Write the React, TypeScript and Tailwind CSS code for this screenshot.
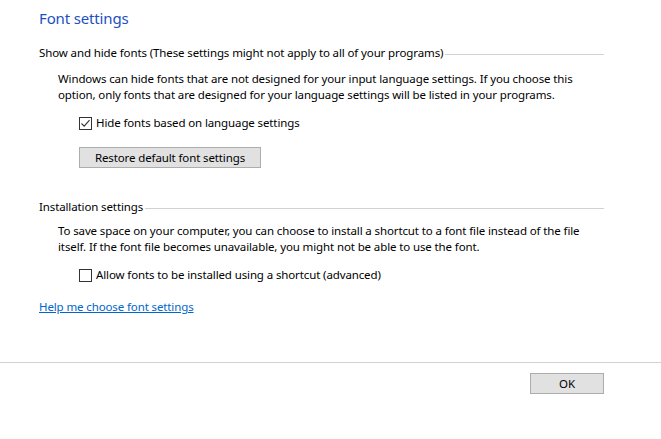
import React from "react";

function Checkbox({ checked }: { checked: boolean }) {
  return (
    <span className="w-[13px] h-[13px] border border-[#333333] bg-white flex items-center justify-center shrink-0">
      {checked && (
        <svg width="11" height="11" viewBox="0 0 11 11">
          <path d="M1.5 5.5 L4.2 8.2 L9.5 2.2" fill="none" stroke="#333333" strokeWidth="1.1" />
        </svg>
      )}
    </span>
  );
}

function SectionHeader({ label }: { label: string }) {
  return (
    <div className="flex items-center w-[565px] h-[16px]">
      <span className="whitespace-nowrap">{label}</span>
      <span className="flex-1 h-px bg-[#d2d2d2] ml-[2px] mt-[2px]" />
    </div>
  );
}

export default function App() {
  return (
    <div
      className="w-[661px] h-[439px] bg-white flex flex-col text-[11.5px] leading-[16px] tracking-[-0.12px] text-black"
      style={{ fontFamily: '"Noto Sans", "Open Sans", sans-serif' }}
    >
      <main className="flex-1 pl-[39px] flex flex-col items-start">
        <h1 className="mt-[8px] text-[15px] leading-[21px] tracking-[-0.15px] text-[#1c4fc4]">Font settings</h1>

        <div className="mt-[16px]">
          <SectionHeader label="Show and hide fonts (These settings might not apply to all of your programs)" />
        </div>
        <p className="mt-[10px] pl-[19px]">
          Windows can hide fonts that are not designed for your input language settings. If you choose this
          <br />
          option, only fonts that are designed for your language settings will be listed in your programs.
        </p>
        <label className="mt-[12px] pl-[40px] flex items-center gap-[4px] h-[16px]">
          <Checkbox checked />
          <span>Hide fonts based on language settings</span>
        </label>
        <div className="mt-[16px] pl-[40px]">
          <button className="w-[182px] h-[21px] bg-[#e1e1e1] border border-[#adadad] leading-[16px]">
            Restore default font settings
          </button>
        </div>

        <div className="mt-[31px]">
          <SectionHeader label="Installation settings" />
        </div>
        <p className="mt-[8px] pl-[19px]">
          To save space on your computer, you can choose to install a shortcut to a font file instead of the file
          <br />
          itself. If the font file becomes unavailable, you might not be able to use the font.
        </p>
        <label className="mt-[12px] pl-[40px] flex items-center gap-[4px] h-[16px]">
          <Checkbox checked={false} />
          <span>Allow fonts to be installed using a shortcut (advanced)</span>
        </label>

        <a href="#" className="mt-[16px] text-[#0066cc] underline">
          Help me choose font settings
        </a>
      </main>

      <footer className="h-[77px] border-t border-[#d2d2d2] flex justify-end items-start pt-[10px] pr-[57px]">
        <button className="w-[74px] h-[21px] bg-[#e1e1e1] border border-[#adadad] leading-[16px]">
          OK
        </button>
      </footer>
    </div>
  );
}
